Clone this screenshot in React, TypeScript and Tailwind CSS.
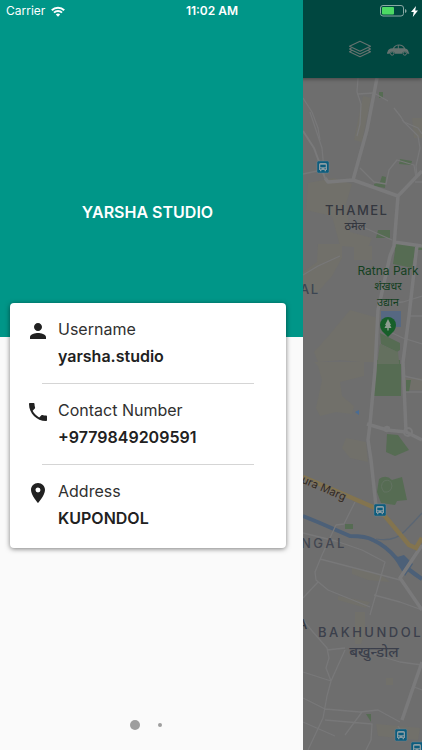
import type { ReactNode } from "react";
import { MdPerson, MdPhone, MdLocationOn } from "react-icons/md";

const sans = "font-['Inter','Noto_Sans','Liberation_Sans',sans-serif]";

function StatusBar() {
  return (
    <div className="absolute inset-x-0 top-0 z-20 grid h-[22px] grid-cols-3 items-center pr-1 pl-1.5 text-white">
      <div className="flex items-center gap-1.5 text-xs">
        <span>Carrier</span>
        <svg viewBox="0 0 14 11" className="h-[11px] w-3.5" fill="none" stroke="currentColor" strokeWidth="2">
          <path d="M.8 4.2a8.8 8.8 0 0 1 12.4 0M3 6.6a5.7 5.7 0 0 1 8 0" />
          <path d="M7 10.8 4.8 8.6a3.1 3.1 0 0 1 4.4 0Z" fill="currentColor" stroke="none" />
        </svg>
      </div>
      <div className="text-center text-xs font-semibold">11:02 AM</div>
      <div className="flex items-center justify-end gap-1">
        <svg viewBox="0 0 27 12" className="h-3 w-[27px]">
          <rect x=".5" y=".5" width="23" height="10.5" rx="2.5" fill="none" stroke="#8aa9a5" />
          <rect x="2" y="2" width="12" height="7.5" rx="1" fill="#4cd964" />
          <path d="M25 4v4q1.6-.6 1.6-2T25 4" fill="#8aa9a5" />
        </svg>
        <svg viewBox="0 0 7 11" className="h-[11px] w-[7px]" fill="currentColor">
          <path d="M5 0 0 6h2.7L1.8 11 7 4.6H4.2Z" />
        </svg>
      </div>
    </div>
  );
}

function AppHeader() {
  return (
    <header className="relative z-10 flex h-[78px] shrink-0 items-end justify-end gap-3.5 bg-[#004740] pr-3 pb-[17px] text-[#65726f] shadow-[0_1px_4px_rgba(0,0,0,0.4)]">
      <button type="button" aria-label="Map layers" className="flex h-6 items-center">
        <svg viewBox="0 0 24 18" className="h-[18px] w-6" fill="none" stroke="currentColor" strokeWidth="1.1" strokeLinejoin="round">
          <path d="M12 1.2 22.5 6.2 12 11.2 1.5 6.2Z" />
          <path d="M3.500 8 1.500 9 12 14 22.500 9 20.500 8M3.500 10.800 1.500 11.800 12 16.800 22.500 11.800 20.500 10.800" />
        </svg>
      </button>
      <button type="button" aria-label="Vehicles" className="flex h-6 items-center">
        <svg viewBox="0 0 24 13" className="h-[13px] w-6" fill="currentColor">
          <path
            fillRule="evenodd"
            d="M1.500 9C1.700 6.600 3.600 5.300 6.800 5.200 8.400 2.600 10.200 1.400 13 1.400c3 0 5 1.500 6.300 4 2 .5 3.200 1.800 3.400 4l.5.3v1H21.400a2.700 2.700 0 0 0-5.300 0H8.900a2.700 2.700 0 0 0-5.300 0H1V9.700ZM8.200 5.200h3.600V2.500C10.100 2.800 9 3.800 8.200 5.200Zm4.600 0h5.100c-1-1.800-2.600-2.800-5.100-2.800Z"
          />
          <circle cx="6.200" cy="10.500" r="1.700" fill="none" stroke="currentColor" />
          <circle cx="18.800" cy="10.500" r="1.700" fill="none" stroke="currentColor" />
        </svg>
      </button>
    </header>
  );
}

function BusStop({ x, y }: { x: number; y: number }) {
  return (
    <g transform={`translate(${x} ${y})`}>
      <rect x="-6" y="-6" width="12" height="12" rx="1.5" fill="#0c5c7d" stroke="#6d8791" strokeWidth=".5" />
      <path fillRule="evenodd" fill="#8b9ca3" d="M-4-2.500Q-4-4-2.500-4h5Q4-4 4-2.500V3H3v1.200H1.600V3h-3.200v1.200H-3V3h-1ZM-2.700-2.200V.3h5.400v-2.500ZM-2.800 1.200v1h1.300v-1Zm4.300 0v1h1.300v-1Z" />
    </g>
  );
}

function CityMap() {
  return (
    <svg
      viewBox="0 78 422 672"
      preserveAspectRatio="xMaxYMin slice"
      className="min-h-[672px] w-full flex-1"
      role="img"
      aria-label="City map"
    >
      <rect y="78" width="422" height="672" fill="#6e6e6e" />
      <g fill="#71706a">
        <path d="M308 183 334 178 352 184 346 204 350 232 372 238 368 248 340 246 332 216 306 210Z" />
        <path d="M318 244h24v14l-10 18-16 18-13-2v-20l14-10Z" />
        <path d="M354 246h18v14h-18ZM350 310 378 318 374 362 360 362 340 360 318 362 314 352 330 334Z" />
        <path d="M314 362h50v14l-24 6 2 14 12 10-2 8-16-2-16 4-4-8 6-28-4-14Z" />
        <path d="M346 438 366 442 368 462 350 458 342 448ZM352 568 380 574 390 582 368 580 352 574ZM338 596 370 602 366 608 338 600Z" />
        <path d="M363 96 371 98 362 142 354 140ZM355 612h10v20l-4 12h-6ZM404 378h18v12h-14ZM412 118h10v20h-8Z" />
        <path d="M376 724 420 728 418 740 378 736ZM386 678h7v7h-7Z" />
      </g>
      <g fill="#566c53">
        <path d="M396 244 416 247 412 268 393 264Z" />
        <path d="M380 333 400 343V350L397 352 381 344ZM376 360 400 360 400 372H375Z" />
        <path d="M380 344 398 352 400 372H376Z" fill="#64705f" />
        <path d="M375 364h26v32h-28ZM406 380h5l-2 12h-3Z" />
        <path d="M387 434 398 435 409 450 395 456 386 452Z" />
        <path d="M379 479Q386 474 392 480L402 477 407 500 397 501 395 505 381 503 377 492Z" />
        <path d="M400 159 412 161 411 165 399 164ZM374 184 380 182 382 176 386 177 385 188 374 186ZM378 230h12v8h-14ZM395 244h27v6h-27Z" />
        <path d="M345 524h8v5h-8ZM366 714 371 714 371 722ZM379 92h4v6h-4Z" />
      </g>
      <path d="M384 481Q391 478 392 486 391 493 384 492 379 486 384 481Z" fill="none" stroke="#637362" />
      <rect x="381" y="311" width="20" height="16" fill="#566882" />

      <g fill="none" stroke="#4c6078">
        <path d="M303 516 320 523 350 536Q366 536 373 540 386 546 396 558 408 570 422 579" strokeWidth="4" />
        <path d="M376 539Q394 542 404 532T422 513" strokeWidth="1.200" opacity=".6" />
      </g>
      <path d="M394 558 404 555 413 564 405 576Z" fill="#4c6078" />

      <g fill="none" stroke="#787879" strokeWidth="1.300" strokeLinejoin="round">
        <path d="M358 78 357 92 361 104 360 124 357 136M358 94 374 93 388 101M394 108 401 117 404 122 418 128 422 134M303 98 312 112 318 128 320 140" />
        <path d="M310 112 322 148 324 170M303 174 322 170M402 120 418 136 420 148 416 166 417 178M360 168 374 182 386 184 389 170 397 160 414 165 416 178M356 224 392 240M415 182h7" />
        <path d="M303 275 318 266 340 256M380 304 403 302 422 296M410 316h12M390 332 403 338 422 344M406 392h16M404 376 422 380" />
        <path d="M355 502 344 524 336 525 322 555 315 572 316 580 328 590 370 607M320 559 370 572 400 580M303 533 336 541 362 550 385 562 370 615M318 582 303 598M374 595 400 602 422 610" />
        <path d="M303 620 313 632 327 648 329 658 326 668 331 681 327 696 323 718 308 750M327 650 345 648M331 681 345 650M303 672 331 681M303 698 325 709 360 712 378 710 400 722M360 650 400 662 422 665M422 690 414 687M325 720 372 724 371 740 366 750M303 722 335 736M362 712 345 735M398 726 404 736" />
      </g>
      <g fill="none" stroke="#7a7a7b" strokeWidth="3.500" strokeLinejoin="round">
        <path d="M377 78 367 130 353 180M325 178 328 182 353 180 398 196 422 171M398 196 394 246 390 256 378 310 375 370 370 424 368 440 371 460 376 506M394 242 422 246M417 245 409 316 403 362 406 432M367 424 387 430 406 432 422 440" />
        <path d="M303 131 314 148 325 178" strokeWidth="2" />
        <path d="M422 545 400 578 422 610M422 662 402 720" />
        <circle cx="408" cy="432" r="4" strokeWidth="2" />
        <circle cx="387" cy="429" r="1.500" />
      </g>
      <path d="M303 477 343 494 380 510 409 545 416 548 422 538" fill="none" stroke="#83744f" strokeWidth="4.500" />

      <BusStop x={323} y={167} />
      <BusStop x={380} y={510} />
      <BusStop x={401} y={735} />
      <BusStop x={417} y={748} />
      <path d="m355 412 4-2v5Z" fill="#496c94" />
      <path d="M388 337 382 331Q380 328 380 325a8 8 0 0 1 16 0q0 3-2 6Z" fill="#175f2a" />
      <path d="M388 319 385 325h1l-1.500 3h2.800v2.500h1.400V328h2.800L390 325h1Z" fill="#8d9c90" />

      <g fill="#34373f" fontSize="13" fontWeight="500" letterSpacing="1.500">
        <text x="325" y="215">THAMEL</text>
        <text x="300" y="294" fill="#3c4552">AL</text>
        <text x="301" y="548" fill="#424650" letterSpacing="2.500">NGAL</text>
        <text x="318" y="637" fill="#3b3f4b" letterSpacing="2.500">BAKHUNDOL</text>
        <text x="298" y="629">A</text>
      </g>
      <g fill="#34373f" fontSize="12" textAnchor="middle">
        <text x="355" y="230" fontSize="11" fontWeight="500">ठमेल</text>
        <text x="374" y="657" fontSize="15" fontWeight="500" fill="#3b3f4b">बखुन्डोल</text>
        <g fill="#14401f">
          <text x="388" y="275">Ratna Park</text>
          <text x="388" y="290" fontSize="11">शंखधर</text>
          <text x="388" y="306" fontSize="11">उद्यान</text>
        </g>
      </g>
      <text x="295" y="480" transform="rotate(23 295 480)" fill="#302923" fontSize="11" stroke="#78716a" strokeWidth="1" paintOrder="stroke">
        oura Marg
      </text>
    </svg>
  );
}

function DetailRow({ icon, label, value }: { icon: ReactNode; label: string; value: string }) {
  return (
    <div className="flex gap-2">
      <div className="flex h-6 w-6 shrink-0 items-center justify-center">{icon}</div>
      <dl>
        <dt className="text-base leading-5 text-[#303030]">{label}</dt>
        <dd className="mt-[7px] text-base leading-5 font-semibold">{value}</dd>
      </dl>
    </div>
  );
}

function Drawer() {
  return (
    <aside className="absolute inset-y-0 left-0 z-10 w-[303px] max-w-full bg-[#fafafa]">
      <div className="flex h-[337px] items-center justify-center bg-[#009688] pt-[86px] pr-2">
        <h1 className="text-base font-semibold text-white">YARSHA STUDIO</h1>
      </div>
      <section className="relative -mt-[34px] mr-[17px] ml-2.5 rounded bg-white px-4 pt-4 pb-5 text-[#212121] shadow-[0_1px_5px_rgba(0,0,0,0.5)]">
        <DetailRow icon={<MdPerson size={24} />} label="Username" value="yarsha.studio" />
        <hr className="mx-4 mt-[17px] mb-4 border-[#d5d5d5]" />
        <DetailRow icon={<MdPhone size={24} />} label="Contact Number" value="+9779849209591" />
        <hr className="mx-4 mt-[17px] mb-4 border-[#d5d5d5]" />
        <DetailRow icon={<MdLocationOn size={24} />} label="Address" value="KUPONDOL" />
      </section>
      <div className="absolute inset-x-0 bottom-5 flex items-center justify-center gap-[18px] pr-3">
        <button type="button" aria-label="Page 1" className="h-2.5 w-2.5 rounded-full bg-[#9e9e9e]" />
        <button type="button" aria-label="Page 2" className="h-1 w-1 rounded-full bg-[#9e9e9e]" />
      </div>
    </aside>
  );
}

export default function App() {
  return (
    <main className={`relative flex min-h-screen flex-col overflow-hidden bg-[#6e6e6e] ${sans}`}>
      <StatusBar />
      <AppHeader />
      <CityMap />
      <Drawer />
    </main>
  );
}
